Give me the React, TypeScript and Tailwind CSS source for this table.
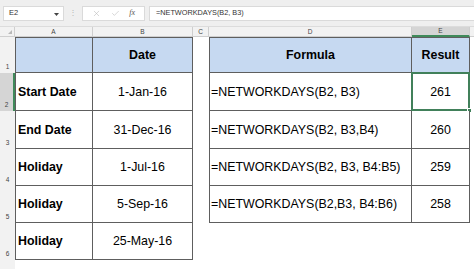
import { Check, X } from 'lucide-react';

const rows = [
    { n: 1, a: '', b: 'Date', d: 'Formula', e: 'Result', head: true },
    { n: 2, a: 'Start Date', b: '1-Jan-16', d: '=NETWORKDAYS(B2, B3)', e: '261' },
    { n: 3, a: 'End Date', b: '31-Dec-16', d: '=NETWORKDAYS(B2, B3,B4)', e: '260' },
    { n: 4, a: 'Holiday', b: '1-Jul-16', d: '=NETWORKDAYS(B2, B3, B4:B5)', e: '259' },
    { n: 5, a: 'Holiday', b: '5-Sep-16', d: '=NETWORKDAYS(B2,B3, B4:B6)', e: '258' },
    { n: 6, a: 'Holiday', b: '25-May-16' },
];

const letters = ['A', 'B', 'C', 'D', 'E'];

function FormulaBar() {
    return <div className="flex items-center gap-0 h-[27px] bg-[#efefef] border-b border-[#dcdcdc] pl-[3px]">
        <div className="relative flex items-center w-[61px] h-[15px] bg-white border border-[#dadada] pl-[5px] text-[7.5px] text-[#333]">
            E2
            <svg className="absolute right-[4px] top-[6px]" width="5" height="3" viewBox="0 0 5 3">
                <polygon points="0,0 5,0 2.5,3" fill="#444" />
            </svg>
        </div>

        <div className="w-[18px] flex justify-center text-[8px] leading-none text-[#b5b5b5]">⋮</div>

        <div className="flex items-center justify-around w-[63px] h-[15px] bg-white border border-[#dadada] px-[4px]">
            <X size={9} strokeWidth={1.4} color="#b4b4b4" />
            <Check size={9} strokeWidth={1.4} color="#b4b4b4" />
            <span className="italic text-[8px] text-[#555]" style={{ fontFamily: '"Liberation Serif", serif' }}>fx</span>
        </div>

        <div className="flex-1 flex items-center h-[15px] ml-[4px] bg-white border-y border-l border-[#dadada] pl-[6px] text-[7.3px] text-[#333]">
            =NETWORKDAYS(B2, B3)
        </div>
    </div>;
}

function Sheet() {
    const line = 'border-[#5e5e5e]';

    return <div className="grid grid-cols-[15px_78px_100px_16px_203px_58px_1fr] grid-rows-[10px_36px_38px_38px_37px_37px_37px_1fr] h-[242px] bg-white text-[12.4px] text-black">
        {/* column headers */}
        <div className="relative bg-[#f2f2f2] border-r border-b border-[#cfcfcf]">
            <svg className="absolute right-[2px] bottom-[2px]" width="4" height="4" viewBox="0 0 4 4">
                <polygon points="4,0 4,4 0,4" fill="#b8b8b8" />
            </svg>
        </div>
        {letters.map((l) => <div
            key={l}
            className={`flex items-center justify-center text-[6.5px] text-[#444] border-r ${l === 'E'
                ? 'bg-[#d5d5d5] border-b-2 border-b-[#3f8a5a] border-r-[#cfcfcf]'
                : 'bg-[#f2f2f2] border-b border-[#cfcfcf]'}`}
        >
            {l}
        </div>)}
        <div className="bg-[#f2f2f2] border-b border-[#cfcfcf]" />

        {rows.map((r) => {
            const top = r.head ? 'border-t' : '';
            const fill = r.head ? 'bg-[#c6d9f1] font-bold' : 'bg-white';
            const hasRight = r.n <= 5;

            return <div key={r.n} className="contents">
                <div className={`flex items-end justify-center pb-[1px] text-[6.5px] text-[#444] ${r.n === 2
                    ? 'bg-[#d5d5d5] border-r-2 border-[#3f8a5a]'
                    : 'bg-[#f2f2f2]'}`}
                >
                    {r.n}
                </div>

                <div className={`flex items-center pl-[2px] pt-[1px] font-bold border-l border-r border-b ${top} ${line} ${r.head ? 'bg-[#c6d9f1]' : 'bg-white'}`}>
                    {r.a}
                </div>

                <div className={`flex items-center justify-center pt-[1px] border-r border-b ${top} ${line} ${fill}`}>
                    {r.b}
                </div>

                <div />

                {hasRight ? <>
                    <div className={`flex items-center pt-[1px] border-l border-r border-b ${top} ${line} ${fill} ${r.head ? 'justify-center' : 'pl-[1px]'}`}>
                        {r.d}
                    </div>

                    <div className={`relative flex items-center justify-center pt-[1px] border-r border-b ${top} ${line} ${fill}`}>
                        {r.e}
                        {r.n === 2 && <>
                            <div className="absolute -left-px -top-px -right-px -bottom-px border-2 border-[#41805a]" />
                            <div className="absolute -right-[3px] -bottom-[3px] w-[5px] h-[5px] bg-[#41805a] border border-white" />
                        </>}
                    </div>
                </> : <>
                    <div />
                    <div />
                </>}

                <div />
            </div>;
        })}

        <div className="bg-[#f2f2f2]" />
        <div className="col-span-6" />
    </div>;
}

export default function App() {
    return <div className="w-[474px] h-[269px] overflow-hidden bg-white" style={{ fontFamily: '"Liberation Sans", Arial, sans-serif' }}>
        <FormulaBar />
        <Sheet />
    </div>;
}
